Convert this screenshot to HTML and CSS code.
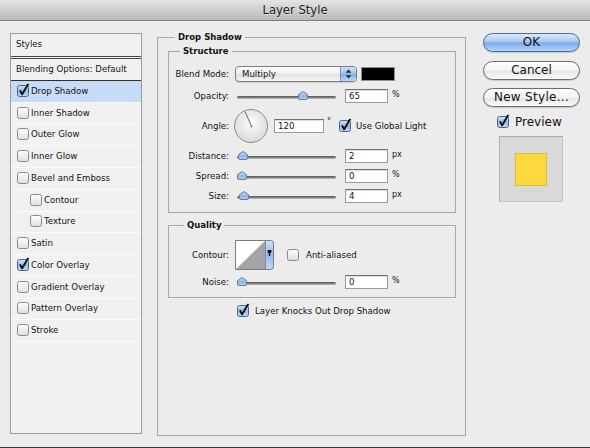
FILE: index.html
```html
<!DOCTYPE html>
<html>
<head>
<meta charset="utf-8">
<title>Layer Style</title>
<link rel="stylesheet" href="styles.css">
</head>
<body>
<svg class="defs" width="0" height="0" aria-hidden="true">
  <defs>
    <linearGradient id="gBox" x1="0" y1="0" x2="0" y2="1">
      <stop offset="0" stop-color="#ffffff"/>
      <stop offset="1" stop-color="#dedede"/>
    </linearGradient>
    <linearGradient id="gBlue" x1="0" y1="0" x2="0" y2="1">
      <stop offset="0" stop-color="#d3e3f8"/>
      <stop offset="0.5" stop-color="#96b9e6"/>
      <stop offset="1" stop-color="#c3daf6"/>
    </linearGradient>
    <linearGradient id="gThumb" x1="0" y1="0" x2="0" y2="1">
      <stop offset="0" stop-color="#d9e7f8"/>
      <stop offset="0.55" stop-color="#8fb3e2"/>
      <stop offset="1" stop-color="#b8d1f2"/>
    </linearGradient>
    <radialGradient id="gDial" cx="0.5" cy="0.4" r="0.6">
      <stop offset="0" stop-color="#fbfbfb"/>
      <stop offset="1" stop-color="#d9d9d9"/>
    </radialGradient>
    <symbol id="cb-off" viewBox="0 0 12 12">
      <rect x="0.5" y="0.5" width="11" height="11" rx="2" fill="url(#gBox)" stroke="#8a8a8a"/>
    </symbol>
    <symbol id="cb-on" viewBox="0 0 12 12" overflow="visible">
      <rect x="0.5" y="0.5" width="11" height="11" rx="2" fill="url(#gBlue)" stroke="#4a6690"/>
      <path d="M2.1 5.7 L3.9 5.1 L5.1 7.4 L10.3 -1.3 L12.3 -0.9 L5.7 10.2 L4.5 10.2 Z" fill="#0d0d0d"/>
    </symbol>
    <symbol id="thumb" viewBox="0 0 10 9">
      <path d="M5 0.5 L9.5 3.6 V7 Q9.5 8.5 8 8.5 H2 Q0.5 8.5 0.5 7 V3.6 Z" fill="url(#gThumb)" stroke="#5b7eac"/>
    </symbol>
  </defs>
</svg>

<div class="window">
  <div class="titlebar">Layer Style</div>

  <div class="content">
    <div class="styles-panel">
      <div class="sp-head">Styles</div>
      <div class="sp-blend">Blending Options: Default</div>
      <ul class="sp-list">
        <li class="sel"><svg class="cb"><use href="#cb-on"/></svg><span>Drop Shadow</span></li>
        <li><svg class="cb"><use href="#cb-off"/></svg><span>Inner Shadow</span></li>
        <li><svg class="cb"><use href="#cb-off"/></svg><span>Outer Glow</span></li>
        <li><svg class="cb"><use href="#cb-off"/></svg><span>Inner Glow</span></li>
        <li><svg class="cb"><use href="#cb-off"/></svg><span>Bevel and Emboss</span></li>
        <li class="sub"><svg class="cb"><use href="#cb-off"/></svg><span>Contour</span></li>
        <li class="sub"><svg class="cb"><use href="#cb-off"/></svg><span>Texture</span></li>
        <li><svg class="cb"><use href="#cb-off"/></svg><span>Satin</span></li>
        <li><svg class="cb"><use href="#cb-on"/></svg><span>Color Overlay</span></li>
        <li><svg class="cb"><use href="#cb-off"/></svg><span>Gradient Overlay</span></li>
        <li><svg class="cb"><use href="#cb-off"/></svg><span>Pattern Overlay</span></li>
        <li><svg class="cb"><use href="#cb-off"/></svg><span>Stroke</span></li>
      </ul>
    </div>

    <fieldset class="group main">
      <legend>Drop Shadow</legend>

      <fieldset class="group structure">
        <legend>Structure</legend>

        <div class="row r-blend">
          <span class="lbl">Blend Mode:</span>
          <div class="select">
            <span class="sel-text">Multiply</span>
            <span class="sel-arrows">
              <svg width="7" height="10" viewBox="0 0 7 10"><path d="M3.5 0.5 L6.3 3.8 H0.7 Z M3.5 9.5 L6.3 6.2 H0.7 Z" fill="#1d2a3c"/></svg>
            </span>
          </div>
          <div class="swatch"></div>
        </div>

        <div class="row r-slider">
          <span class="lbl">Opacity:</span>
          <div class="slider"><svg class="thumb" style="left:63px"><use href="#thumb"/></svg></div>
          <div class="num">65</div>
          <span class="unit">%</span>
        </div>

        <div class="row r-angle">
          <span class="lbl">Angle:</span>
          <svg class="dial" width="34" height="34" viewBox="0 0 34 34">
            <circle cx="17" cy="17" r="16.5" fill="url(#gDial)" stroke="#8c8c8c"/>
            <line x1="17.5" y1="17.5" x2="11" y2="2.5" stroke="#6a6a6a" stroke-width="1"/>
            <circle cx="17.5" cy="17.5" r="1" fill="#777"/>
          </svg>
          <div class="num wide">120</div>
          <span class="deg">°</span>
          <svg class="cb cb-global"><use href="#cb-on"/></svg>
          <span class="cb-label">Use Global Light</span>
        </div>

        <div class="row r-slider">
          <span class="lbl">Distance:</span>
          <div class="slider"><svg class="thumb" style="left:3px"><use href="#thumb"/></svg></div>
          <div class="num">2</div>
          <span class="unit">px</span>
        </div>

        <div class="row r-slider">
          <span class="lbl">Spread:</span>
          <div class="slider"><svg class="thumb" style="left:2px"><use href="#thumb"/></svg></div>
          <div class="num">0</div>
          <span class="unit">%</span>
        </div>

        <div class="row r-slider">
          <span class="lbl">Size:</span>
          <div class="slider"><svg class="thumb" style="left:4px"><use href="#thumb"/></svg></div>
          <div class="num">4</div>
          <span class="unit">px</span>
        </div>
      </fieldset>

      <fieldset class="group quality">
        <legend>Quality</legend>

        <div class="row r-contour">
          <span class="lbl">Contour:</span>
          <svg class="contour" width="39" height="30" viewBox="0 0 39 30">
            <rect x="0.5" y="0.5" width="30" height="29" fill="#ffffff"/>
            <path d="M0.5 29.5 L30.5 0.5 V29.5 Z" fill="#a4a4a4"/>
            <path d="M30.5 0.5 H35.5 Q38.5 0.5 38.5 3.5 V26.5 Q38.5 29.5 35.5 29.5 H30.5 Z" fill="url(#gBlue)"/>
            <path d="M0.5 0.5 H35.5 Q38.5 0.5 38.5 3.5 V26.5 Q38.5 29.5 35.5 29.5 H0.5 Z" fill="none" stroke="#7a7a7a"/>
            <line x1="30.5" y1="0.5" x2="30.5" y2="29.5" stroke="#6f8fbf"/>
            <path d="M32.6 10 H36.4 V12.2 L35.2 13.6 V16 H33.8 V13.6 L32.6 12.2 Z" fill="#111"/>
          </svg>
          <svg class="cb cb-aa"><use href="#cb-off"/></svg>
          <span class="cb-label">Anti-aliased</span>
        </div>

        <div class="row r-slider">
          <span class="lbl">Noise:</span>
          <div class="slider"><svg class="thumb" style="left:2px"><use href="#thumb"/></svg></div>
          <div class="num">0</div>
          <span class="unit">%</span>
        </div>
      </fieldset>

      <div class="row r-knock">
        <svg class="cb"><use href="#cb-on"/></svg>
        <span class="cb-label">Layer Knocks Out Drop Shadow</span>
      </div>
    </fieldset>

    <div class="side">
      <div class="btn btn-ok">OK</div>
      <div class="btn btn-cancel">Cancel</div>
      <div class="btn btn-new">New Style...</div>
      <div class="preview-row">
        <svg class="cb"><use href="#cb-on"/></svg>
        <span>Preview</span>
      </div>
      <div class="preview-box"><div class="preview-swatch"></div></div>
    </div>
  </div>

  <div class="bottom-edge"></div>
</div>
</body>
</html>
```

FILE: styles.css
```css
html, body {
  margin: 0;
  padding: 0;
}

body {
  width: 590px;
  height: 448px;
  overflow: hidden;
  background: #ececec;
  font-family: "DejaVu Sans", "Liberation Sans", sans-serif;
  font-size: 8.6px;
  color: #111;
}

.defs {
  display: block;
  width: 0;
  height: 0;
  overflow: hidden;
}

.window {
  display: flex;
  flex-direction: column;
  height: 448px;
}

.titlebar {
  flex: none;
  height: 20px;
  line-height: 20px;
  text-align: center;
  font-size: 11.6px;
  color: #1c1c1c;
  text-shadow: 0 1px 0 rgba(255, 255, 255, 0.45);
  background: linear-gradient(#e4e4e4, #b9b9b9);
  border-bottom: 1px solid #7f7f7f;
}

.content {
  flex: 1;
  display: flex;
  align-items: flex-start;
}

/* ---------- Styles list ---------- */
.styles-panel {
  flex: none;
  box-sizing: border-box;
  width: 132px;
  height: 401px;
  margin: 12px 0 0 10px;
  border: 1px solid #9c9c9c;
  background: #f1f1f1;
}

.sp-head {
  box-sizing: border-box;
  height: 25px;
  line-height: 20px;
  padding-left: 5px;
  border-bottom: 3px double #4a4a4a;
}

.sp-blend {
  box-sizing: border-box;
  height: 22px;
  line-height: 20px;
  padding-left: 5px;
  border-bottom: 1px solid #2e2e2e;
}

.sp-list {
  list-style: none;
  margin: 0;
  padding: 0;
}

.sp-list li {
  box-sizing: border-box;
  height: 21.75px;
  display: flex;
  align-items: center;
  padding: 0 0 1px 6px;
  border-bottom: 1px solid #fbfbfb;
}

.sp-list li.sub {
  padding-left: 19px;
}

.sp-list li.sel {
  background: #c8dbf6;
}

.cb {
  flex: none;
  width: 12px;
  height: 12px;
  overflow: visible;
}

.sp-list .cb {
  margin-right: 2px;
}

/* ---------- group boxes ---------- */
.group {
  margin: 0;
  min-width: 0;
  box-sizing: border-box;
  border: 1px solid #a9a9a9;
}

.group > legend {
  font-weight: bold;
  font-size: 8.5px;
  line-height: 12px;
  padding: 0 3px;
}

.main {
  flex: none;
  width: 309px;
  height: 405px;
  margin: 10px 0 0 15px;
  padding: 2px 9px 0 10px;
}

.main > legend {
  margin-left: 7px;
}

.structure {
  width: 288px;
  padding: 8px 0 9px 0;
}

.structure > legend {
  margin-left: 11px;
}

.quality {
  width: 288px;
  margin-top: 6px;
  padding: 9px 0 8px 0;
}

.quality > legend {
  margin-left: 15px;
}

/* ---------- rows ---------- */
.row {
  display: flex;
  align-items: center;
}

.row + .row {
  margin-top: 6px;
}

.quality .row + .row {
  margin-top: 5px;
}

.lbl {
  flex: none;
  width: 60px;
  margin-right: 6px;
  text-align: right;
}

.r-blend {
  height: 18px;
}

.r-slider {
  height: 14px;
}

.r-angle {
  height: 34px;
}

.r-contour {
  height: 30px;
}

.select {
  flex: none;
  box-sizing: border-box;
  width: 122px;
  height: 16px;
  display: flex;
  border: 1px solid #7c7c7c;
  border-radius: 4px;
  overflow: hidden;
  background: linear-gradient(#ffffff, #ededed 50%, #e2e2e2 51%, #f4f4f4);
  box-shadow: 0 1px 1px rgba(0, 0, 0, 0.12);
}

.sel-text {
  flex: 1;
  padding-left: 6px;
  line-height: 14px;
}

.sel-arrows {
  flex: none;
  width: 15px;
  display: flex;
  align-items: center;
  justify-content: center;
  border-left: 1px solid #7193c6;
  background: linear-gradient(#d0e2f9, #9cbfea 50%, #82ace4 51%, #bcd6f6);
}

.swatch {
  flex: none;
  box-sizing: border-box;
  width: 34px;
  height: 14px;
  margin-left: 4px;
  background: #000;
  border: 1px solid #8f8f8f;
}

.slider {
  flex: none;
  position: relative;
  width: 103px;
  height: 14px;
}

.slider::before {
  content: "";
  position: absolute;
  left: 2px;
  right: 2px;
  top: 7px;
  height: 3px;
  border-radius: 2px;
  background: linear-gradient(#4e4e4e, #8c8c8c 60%, #c4c4c4);
}

.thumb {
  position: absolute;
  top: 2px;
  width: 10px;
  height: 9px;
}

.num {
  flex: none;
  box-sizing: border-box;
  width: 43px;
  height: 14px;
  margin-left: 7px;
  padding-left: 3px;
  line-height: 13px;
  background: #fff;
  border: 1px solid #9a9a9a;
  border-top-color: #6e6e6e;
  box-shadow: inset 0 1px 1px rgba(0, 0, 0, 0.14);
}

.num.wide {
  width: 50px;
  margin-left: 6px;
}

.unit {
  margin-left: 4px;
  font-size: 8px;
  align-self: flex-start;
  margin-top: 0;
  line-height: 11px;
}

.dial {
  flex: none;
  margin-left: -1px;
}

.deg {
  align-self: flex-start;
  margin-top: 9px;
  margin-left: 3px;
  font-size: 8px;
  line-height: 8px;
}

.cb-global {
  margin-left: 8px;
}

.cb-label {
  margin-left: 5px;
}

.contour {
  flex: none;
}

.cb-aa {
  margin-left: 13px;
}

.cb-aa + .cb-label {
  margin-left: 7px;
}

.r-knock {
  height: 13px;
  margin-top: 6px;
  padding-left: 69px;
}

.r-knock .cb-label {
  margin-left: 6px;
}

/* ---------- right column ---------- */
.side {
  flex: none;
  width: 97px;
  margin: 12px 0 0 17px;
  display: flex;
  flex-direction: column;
}

.btn {
  box-sizing: border-box;
  height: 19px;
  line-height: 17px;
  text-align: center;
  font-size: 12px;
  color: #111;
  border: 1px solid #6c6c6c;
  border-radius: 10px;
  background: linear-gradient(#ffffff, #f3f3f3 50%, #e4e4e4 51%, #fbfbfb);
  box-shadow: 0 1px 1px rgba(0, 0, 0, 0.15);
}

.btn-ok {
  border-color: #4a6b9f;
  background: linear-gradient(#dbe9fb, #a9c8f0 45%, #7eaaea 52%, #b4d3fa);
}

.btn-cancel {
  margin-top: 9px;
}

.btn-new {
  margin-top: 8px;
  letter-spacing: 0.3px;
}

.preview-row {
  display: flex;
  align-items: center;
  height: 14px;
  margin-top: 8px;
  padding-left: 14px;
  font-size: 12px;
}

.preview-row span {
  margin-left: 6px;
}

.preview-box {
  box-sizing: border-box;
  width: 64px;
  height: 66px;
  margin: 7px 0 0 16px;
  display: flex;
  align-items: center;
  justify-content: center;
  background: #d9d9d9;
  border: 1px solid #c2c2c2;
  border-top-color: #a9a9a9;
  border-left-color: #b0b0b0;
}

.preview-swatch {
  box-sizing: border-box;
  width: 32px;
  height: 33px;
  background: #fcd93d;
  border: 1px solid #e1bb36;
}

.bottom-edge {
  flex: none;
  height: 1px;
  background: #353535;
}
```
